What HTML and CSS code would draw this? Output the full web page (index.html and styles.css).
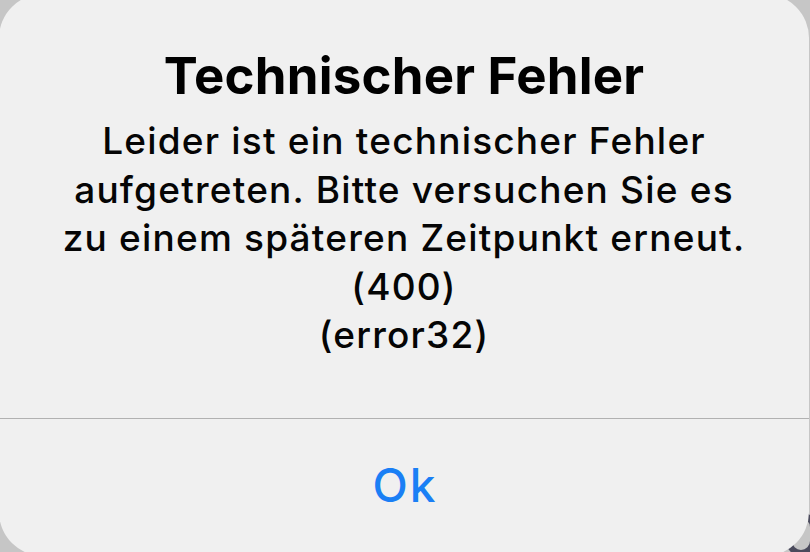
FILE: index.html
```html
<!DOCTYPE html>
<html lang="de">
<head>
<meta charset="utf-8">
<link rel="stylesheet" href="styles.css">
</head>
<body>
<div class="stage">
  <div class="behind" aria-hidden="true"></div>
  <div class="alert">
    <div class="content">
      <h1 class="title">Technischer Fehler</h1>
      <p class="message">Leider ist ein technischer Fehler<br>aufgetreten. Bitte versuchen Sie es<br>zu einem späteren Zeitpunkt erneut.<br>(400)<br>(error32)</p>
    </div>
    <div class="actions">
      <button class="action">Ok</button>
    </div>
  </div>
</div>
</body>
</html>
```

FILE: styles.css
```css
html, body {
  margin: 0;
  padding: 0;
  width: 810px;
  height: 552px;
  overflow: hidden;
  background: #c6c6c6;
}
.stage {
  width: 810px;
  height: 552px;
  overflow: hidden;
  position: relative;
}
.behind {
  position: absolute;
  left: 786px;
  top: 512px;
  width: 30px;
  height: 44px;
  border: 6px solid #4a4a5c;
  border-radius: 18px;
  box-sizing: border-box;
}
.alert {
  position: absolute;
  left: -1px;
  top: -6px;
  width: 810px;
  height: 562px;
  background: #f0f0f0;
  border-radius: 44px;
  display: flex;
  flex-direction: column;
  font-family: Inter, "Noto Sans", sans-serif;
  color: #000;
}
.content {
  height: 425px;
  box-sizing: border-box;
  padding-top: 53px;
  text-align: center;
  border-bottom: 1.5px solid #b1b1b1;
}
.title {
  margin: 0;
  font-size: 51px;
  font-weight: 700;
  line-height: 58px;
  letter-spacing: 0.2px;
}
.message {
  margin: 12px 0 0;
  font-size: 37px;
  font-weight: 500;
  line-height: 48.6px;
  letter-spacing: 1.2px;
  color: #050505;
}
.actions {
  flex: 1;
  display: flex;
  justify-content: center;
  padding-top: 36px;
}
.action {
  border: 0;
  background: none;
  font-family: Inter, "Noto Sans", sans-serif;
  font-size: 46px;
  font-weight: 500;
  letter-spacing: 2px;
  color: #1a7ff5;
  padding: 0 0 0 2px;
  height: 60px;
  line-height: 60px;
}
```
